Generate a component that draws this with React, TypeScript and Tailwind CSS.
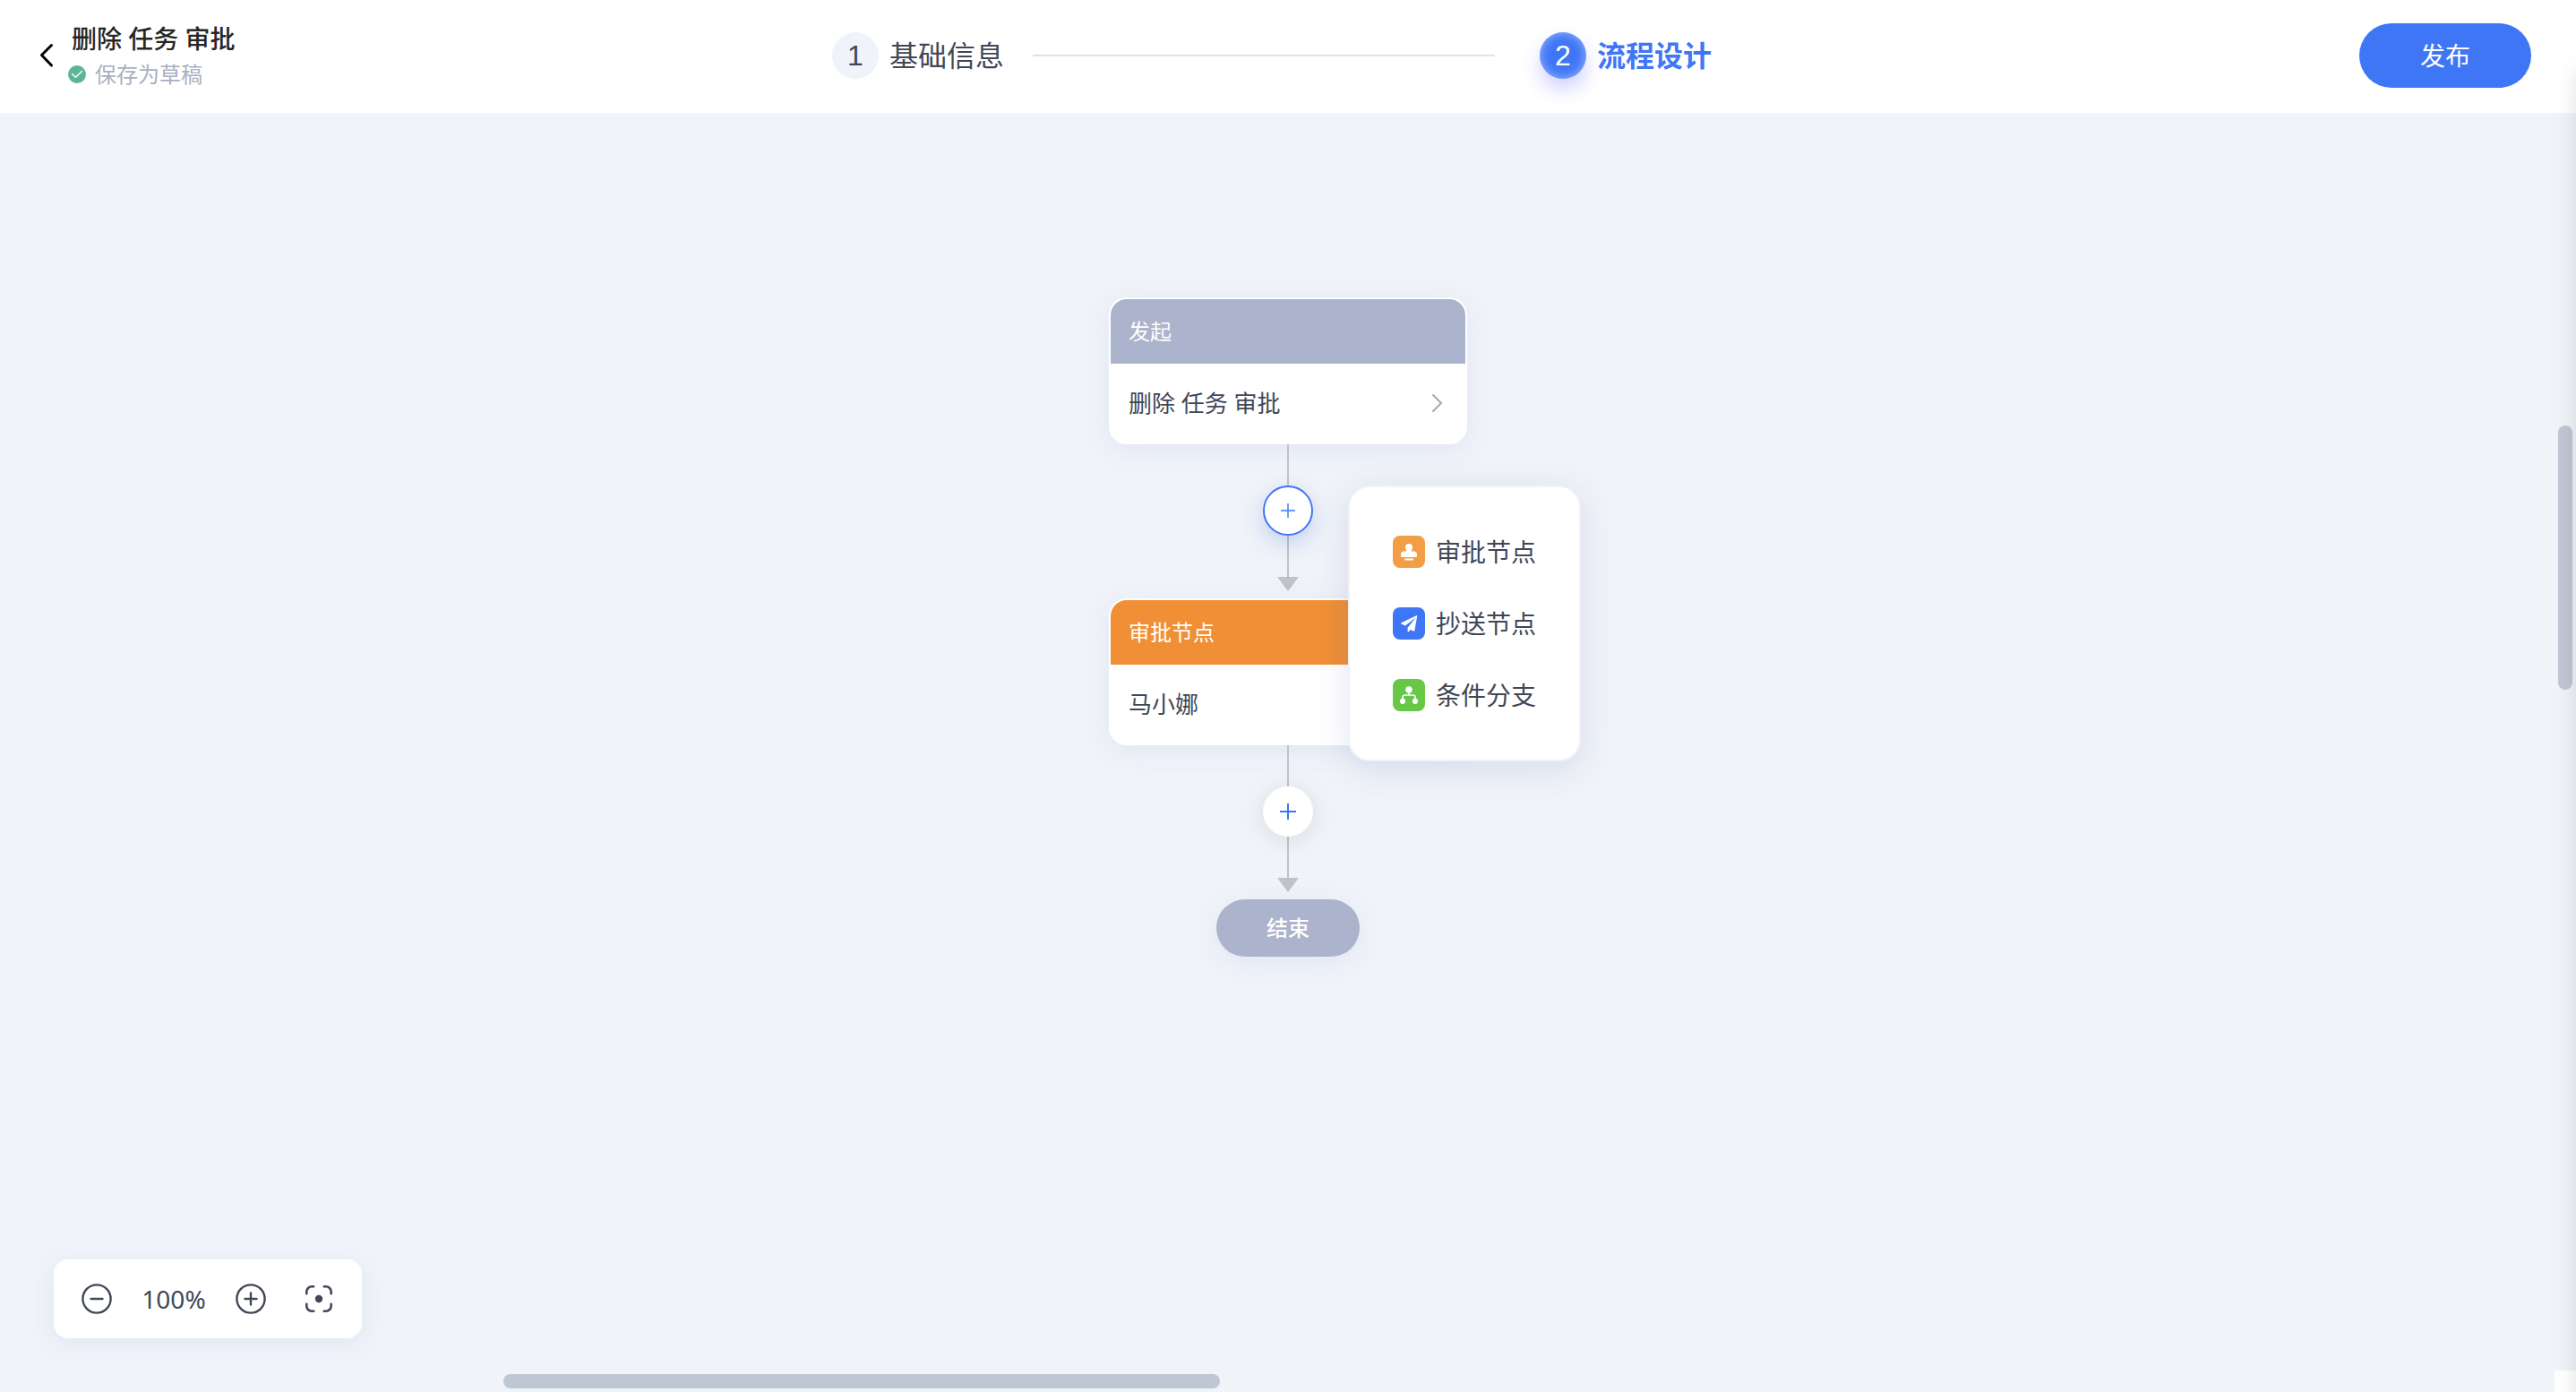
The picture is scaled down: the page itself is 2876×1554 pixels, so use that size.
import type { ReactNode } from "react";
import { clsx } from "clsx";

function Step({ index, label, active = false }: { index: number; label: string; active?: boolean }) {
  return (
    <li className="flex items-center gap-3 text-[32px] leading-[52px]">
      <span
        className={clsx(
          "flex size-[52px] items-center justify-center rounded-full font-['Liberation_Sans',sans-serif]",
          active
            ? "bg-[#3f76f6] text-white shadow-[inset_0_0_12px_rgba(255,255,255,0.5),0_12px_20px_rgba(80,80,255,0.25)]"
            : "bg-[#f0f3f9] text-[#414756]"
        )}
      >
        {index}
      </span>
      <span className={active ? "font-bold text-[#3f76f6]" : "text-[#414756]"}>{label}</span>
    </li>
  );
}

function Header() {
  return (
    <header className="flex h-[126px] shrink-0 items-center bg-white pb-[2px]">
      <div className="flex w-[420px] items-center pl-10">
        <button type="button" aria-label="返回" className="flex h-10 w-6 items-center justify-center">
          <svg viewBox="0 0 24 40" className="h-10 w-6" fill="none" stroke="#000" strokeWidth="3">
            <path d="M17.5 8.5L6.5 19.5L17.5 31" strokeLinecap="round" strokeLinejoin="round" />
          </svg>
        </button>
        <div className="flex flex-col pt-[2px] pl-3">
          <h1 className="pl-1 text-[28px] leading-10 font-medium text-[#262626]">删除 任务 审批</h1>
          <p className="flex items-center gap-[10px] text-2xl leading-10 text-[#a9b0c0]">
            <svg viewBox="0 0 20 20" className="size-5">
              <circle cx="10" cy="10" r="10" fill="#5cb596" />
              <path
                d="M4.5 9.5L8.5 13.2L15.5 6.5"
                fill="none"
                stroke="#fff"
                strokeWidth="1.4"
                strokeLinecap="round"
                strokeLinejoin="round"
              />
            </svg>
            保存为草稿
          </p>
        </div>
      </div>
      <ol className="flex flex-1 items-center justify-center">
        <Step index={1} label="基础信息" />
        <li aria-hidden="true" className="mr-[50px] ml-8 h-[2px] w-[516px] bg-[#dde3e8]" />
        <Step index={2} label="流程设计" active />
      </ol>
      <div className="flex w-[456px] justify-end pr-[50px]">
        <button type="button" className="h-[72px] w-48 rounded-full bg-[#3f76f6] text-[28px] text-white">
          发布
        </button>
      </div>
    </header>
  );
}

function NodeCard({ title, titleClass, children }: { title: string; titleClass: string; children: ReactNode }) {
  return (
    <section className="w-[400px] overflow-hidden rounded-[20px] border-2 border-white bg-white shadow-[0_6px_28px_rgba(100,120,220,0.1)]">
      <h2 className={clsx("px-5 text-2xl leading-[72px] text-white", titleClass)}>{title}</h2>
      <div className="flex h-[88px] items-center justify-between px-5 text-[26px] text-[#414756]">
        {children}
      </div>
    </section>
  );
}

function Connector({ active = false, children }: { active?: boolean; children?: ReactNode }) {
  return (
    <div className="flex flex-col items-center pb-2">
      <div className="h-[46px] w-[2px] bg-[#bfc2c9]" />
      <div className="relative">
        <button
          type="button"
          aria-label="添加节点"
          className={clsx(
            "flex size-14 items-center justify-center rounded-full bg-white",
            active
              ? "border-2 border-[#3f76f6] shadow-[0_8px_24px_rgba(63,100,220,0.25)]"
              : "shadow-[0_4px_28px_rgba(0,0,0,0.1)]"
          )}
        >
          <svg viewBox="0 0 18 18" className={active ? "size-4" : "size-[18px]"}>
            <path d="M9 0V18M0 9H18" stroke="#3f76f6" strokeWidth={active ? 1.6 : 2} />
          </svg>
        </button>
        {children}
      </div>
      <div className="h-[46px] w-[2px] bg-[#bfc2c9]" />
      <svg viewBox="0 0 24 16" className="h-4 w-6">
        <path d="M0 0H24L12 16Z" fill="#bfc2c9" />
      </svg>
    </div>
  );
}

const nodeTypes = [
  {
    name: "审批节点",
    color: "bg-[#f29e46]",
    icon: (
      <>
        <circle cx="18" cy="13" r="4" />
        <path d="M15.5 14.5h5c-.5 1.2-.3 2.8 1 3h2a3.5 3.5 0 0 1 3.5 3.5v1.5a1.5 1.5 0 0 1-1.5 1.5h-15A1.5 1.5 0 0 1 9 22.5V21a3.5 3.5 0 0 1 3.5-3.5h2c1.3-.2 1.5-1.8 1-3z" />
        <rect x="13" y="25.5" width="10" height="2" rx="1" />
      </>
    ),
  },
  {
    name: "抄送节点",
    color: "bg-[#3f76f6]",
    icon: (
      <path d="M26.3 9.2c.5-.3 1 0 .9.500L24.300 26.200c-.1.500-.5.700-.9.500l-3.500-1.600-2.300 2.200c-.4.400-1 .1-1-.4v-4.200L26 11 14 20.600l-4.500-2c-.6-.3-.6-1 0-1.300z" />
    ),
  },
  {
    name: "条件分支",
    color: "bg-[#66c845]",
    icon: (
      <>
        <circle cx="18" cy="12" r="3.8" />
        <circle cx="11" cy="24.8" r="3.1" />
        <circle cx="25" cy="24.8" r="3.1" />
        <path
          d="M18 14v4M11 23v-2.5a2.5 2.5 0 0 1 2.5-2.5h9a2.5 2.5 0 0 1 2.5 2.5V23"
          fill="none"
          stroke="#fff"
          strokeWidth="1.6"
        />
      </>
    ),
  },
];

function NodeMenu() {
  return (
    <ul className="absolute top-0 left-full z-10 ml-[39px] w-[260px] rounded-3xl border-2 border-[#f0f2f7] bg-white px-12 py-8 shadow-[0_8px_36px_rgba(80,100,170,0.16)]">
      {nodeTypes.map((type) => (
        <li key={type.name}>
          <button
            type="button"
            className="flex h-20 items-center gap-3 text-[28px] whitespace-nowrap text-[#414756]"
          >
            <svg viewBox="0 0 36 36" className={clsx("size-9 rounded-lg", type.color)} fill="#fff">
              {type.icon}
            </svg>
            {type.name}
          </button>
        </li>
      ))}
    </ul>
  );
}

function ZoomBar() {
  return (
    <div className="absolute bottom-[60px] left-[60px] flex h-[88px] w-[344px] items-center rounded-2xl bg-white px-7 text-[28px] text-[#414756] shadow-[0_6px_24px_rgba(100,120,200,0.1)]">
      <button type="button" aria-label="缩小" className="flex size-10 items-center justify-center">
        <svg viewBox="0 0 34 34" className="size-[34px]" fill="none" stroke="#414756" strokeWidth="2.4">
          <circle cx="17" cy="17" r="15.6" />
          <path d="M10.5 17H23.5" strokeLinecap="round" />
        </svg>
      </button>
      <span className="flex-1 text-center">100%</span>
      <button type="button" aria-label="放大" className="flex size-10 items-center justify-center">
        <svg viewBox="0 0 34 34" className="size-[34px]" fill="none" stroke="#414756" strokeWidth="2.4">
          <circle cx="17" cy="17" r="15.6" />
          <path d="M10.5 17H23.5M17 10.5V23.5" strokeLinecap="round" />
        </svg>
      </button>
      <button type="button" aria-label="居中" className="ml-9 flex size-10 items-center justify-center">
        <svg
          viewBox="0 0 30 30"
          className="size-[30px]"
          fill="none"
          stroke="#414756"
          strokeWidth="2.6"
          strokeLinecap="round"
        >
          <path d="M1.3 9.2V7A5.7 5.7 0 0 1 7 1.3H9.2M20.8 1.3H23A5.7 5.7 0 0 1 28.7 7V9.2M28.7 20.8V23A5.7 5.7 0 0 1 23 28.7H20.8M9.2 28.7H7A5.7 5.7 0 0 1 1.3 23V20.8" />
          <circle cx="15" cy="15" r="4.2" fill="#414756" stroke="none" />
        </svg>
      </button>
    </div>
  );
}

function Scrollbars() {
  return (
    <>
      <div className="absolute top-[349px] right-1 h-[295px] w-4 rounded-full bg-[#bfc6d4]" />
      <div className="absolute bottom-1 left-[562px] h-4 w-[800px] rounded-full bg-[#bfc6d4]" />
      <div className="absolute right-0 bottom-0 size-6 bg-white" />
    </>
  );
}

export default function App() {
  return (
    <div className="relative flex h-screen flex-col overflow-hidden bg-[#f0f3f8] font-['Noto_Sans','Noto_Sans_CJK_SC',sans-serif]">
      <Header />
      <main className="relative flex flex-1 flex-col items-center pt-[206px]">
        <NodeCard title="发起" titleClass="bg-[#acb3cc]">
          删除 任务 审批
          <svg viewBox="0 0 24 24" className="size-6" fill="none" stroke="#a3aab8" strokeWidth="2">
            <path d="M8 3L17 12L8 21" strokeLinecap="round" strokeLinejoin="round" />
          </svg>
        </NodeCard>
        <Connector active>
          <NodeMenu />
        </Connector>
        <NodeCard title="审批节点" titleClass="bg-[#f08f36]">
          马小娜
        </NodeCard>
        <Connector />
        <div className="flex h-16 w-40 items-center justify-center rounded-full bg-[#acb3cc] text-2xl font-medium text-white shadow-[0_6px_28px_rgba(100,120,220,0.1)]">
          结束
        </div>
        <ZoomBar />
        <Scrollbars />
      </main>
      {/* edge of the collapsed drawer */}
      <div className="absolute top-20 -bottom-10 left-full z-20 w-10 shadow-[0_0_24px_rgba(0,0,0,0.12)]" />
    </div>
  );
}
